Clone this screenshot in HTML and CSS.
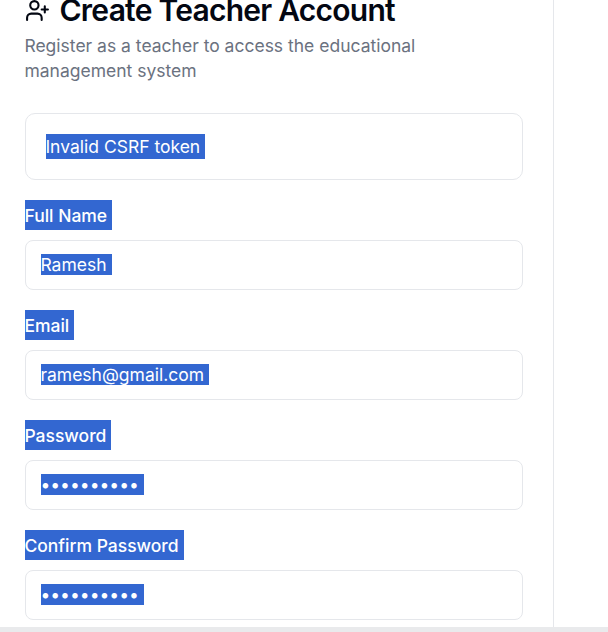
FILE: index.html
```html
<!DOCTYPE html>
<html lang="en">
<head>
<meta charset="utf-8">
<title>Create Teacher Account</title>
<link rel="stylesheet" href="styles.css">
</head>
<body>
<main class="card">
  <header class="card-header">
    <h1 class="title">
      <svg class="icon" viewBox="0 0 24 24" fill="none" stroke="currentColor" stroke-width="2" stroke-linecap="round" stroke-linejoin="round"><path d="M16 21v-2a4 4 0 0 0-4-4H6a4 4 0 0 0-4 4v2"/><circle cx="9" cy="7" r="4"/><path d="M19 8v6M22 11h-6"/></svg>
      <span class="title-text">Create Teacher Account</span>
    </h1>
    <p class="description">Register as a teacher to access the educational management system</p>
  </header>
  <form class="form">
    <div class="alert"><span class="selected message">Invalid CSRF token</span></div>
    <div class="field">
      <label class="selected label">Full Name</label>
      <div class="input"><span class="selected value">Ramesh</span></div>
    </div>
    <div class="field">
      <label class="selected label">Email</label>
      <div class="input"><span class="selected value">ramesh@gmail.com</span></div>
    </div>
    <div class="field">
      <label class="selected label">Password</label>
      <div class="input"><span class="selected value dots">••••••••••</span></div>
    </div>
    <div class="field">
      <label class="selected label">Confirm Password</label>
      <div class="input"><span class="selected value dots">••••••••••</span></div>
    </div>
  </form>
</main>
<footer class="bottom-bar"></footer>
</body>
</html>
```
FILE: styles.css
```css
* { box-sizing: border-box; }
body {
  margin: 0;
  height: 632px;
  display: flex;
  flex-direction: column;
  overflow: hidden;
  background: #fff;
  color: #030712;
  font-family: Inter, "Liberation Sans", sans-serif;
  font-size: 17.5px;
  line-height: 25px;
}
.card {
  width: 554px;
  height: 627px;
  padding: 0 30px 0 25px;
  border-right: 1px solid #e5e7eb;
}
.card-header { margin-top: -5px; }
.title {
  display: flex;
  align-items: center;
  gap: 10px;
  margin: 0 0 8px;
  font-size: 30px;
  font-weight: 600;
  line-height: 30px;
  letter-spacing: -0.75px;
  white-space: nowrap;
}
.title-text { margin-left: -0.5px; }
.icon { width: 25px; height: 25px; flex: none; }
.description { margin: 0 0 0 -0.6px; color: #6b7280; }
.form {
  display: flex;
  flex-direction: column;
  gap: 20px;
  margin-top: 30px;
}
.alert {
  display: flex;
  height: 67px;
  padding: 20px;
  border: 1px solid #e5e7eb;
  border-radius: 10px;
}
.field {
  display: flex;
  flex-direction: column;
  align-items: flex-start;
  gap: 10px;
}
.selected {
  background: #3367d1;
  color: #fff;
  padding-right: 5px;
  text-indent: -0.6px;
  white-space: nowrap;
}
.message { height: 25px; }
.label { height: 30px; line-height: 31px; font-weight: 500; }
.input {
  display: flex;
  align-items: flex-start;
  width: 100%;
  height: 50px;
  padding: 13px 15px;
  border: 1px solid #e5e7eb;
  border-radius: 8px;
}
.value { height: 21px; line-height: 21px; }
.dots { width: 103px; }
.bottom-bar { height: 5px; background: #e9eaec; }
```
